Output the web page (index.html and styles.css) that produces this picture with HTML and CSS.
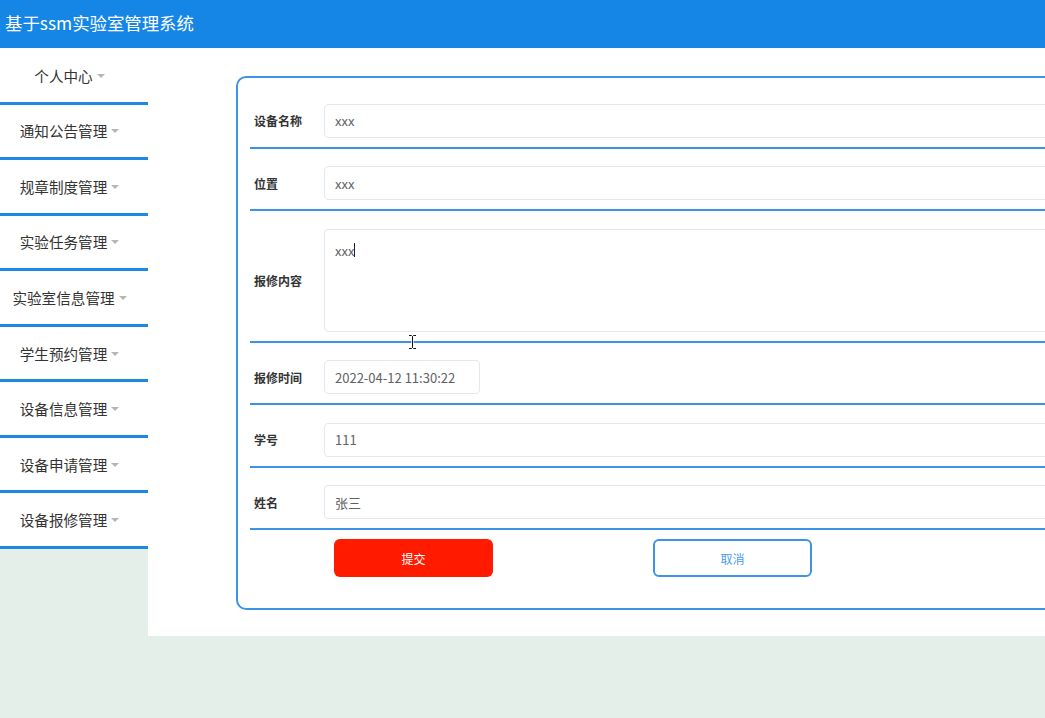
FILE: index.html
```html
<!DOCTYPE html>
<html lang="zh-CN">
<head>
<meta charset="utf-8">
<title>基于ssm实验室管理系统</title>
<link rel="stylesheet" href="styles.css">
</head>
<body>
<header class="topbar">基于ssm实验室管理系统</header>
<div class="layout">
  <nav class="sidebar">
    <div class="nav-item">个人中心<span class="caret"></span></div>
    <div class="nav-item">通知公告管理<span class="caret"></span></div>
    <div class="nav-item">规章制度管理<span class="caret"></span></div>
    <div class="nav-item">实验任务管理<span class="caret"></span></div>
    <div class="nav-item">实验室信息管理<span class="caret"></span></div>
    <div class="nav-item">学生预约管理<span class="caret"></span></div>
    <div class="nav-item">设备信息管理<span class="caret"></span></div>
    <div class="nav-item">设备申请管理<span class="caret"></span></div>
    <div class="nav-item">设备报修管理<span class="caret"></span></div>
  </nav>
  <main class="main">
    <form class="card">
      <div class="row">
        <label class="label">设备名称</label>
        <div class="input">xxx</div>
      </div>
      <div class="row">
        <label class="label">位置</label>
        <div class="input">xxx</div>
      </div>
      <div class="row">
        <label class="label">报修内容</label>
        <div class="input textarea">xxx<span class="text-caret"></span></div>
      </div>
      <div class="row">
        <label class="label">报修时间</label>
        <div class="input date">2022-04-12 11:30:22</div>
      </div>
      <div class="row">
        <label class="label">学号</label>
        <div class="input">111</div>
      </div>
      <div class="row">
        <label class="label">姓名</label>
        <div class="input">张三</div>
      </div>
      <div class="actions">
        <button type="button" class="btn btn-submit">提交</button>
        <button type="button" class="btn btn-cancel">取消</button>
      </div>
    </form>
  </main>
</div>
<svg class="ibeam" width="9" height="16" viewBox="0 0 9 16" aria-hidden="true">
  <path d="M1 1.5h2.5L4.5 2.5L5.5 1.5H8M4.5 2.5V13.5M1 14.5h2.5L4.5 13.5L5.5 14.5H8" fill="none" stroke="#fff" stroke-width="2.2"/>
  <path d="M1 1.5h2.5L4.5 2.5L5.5 1.5H8M4.5 2.5V13.5M1 14.5h2.5L4.5 13.5L5.5 14.5H8" fill="none" stroke="#111" stroke-width="1"/>
</svg>
</body>
</html>
```

FILE: styles.css
```css
html, body {
  margin: 0;
  padding: 0;
  overflow: hidden;
}
body {
  width: 1045px;
  height: 718px;
  background: #e4efe9;
  font-family: "Noto Sans CJK SC", "Noto Sans", "Liberation Sans", sans-serif;
  color: #333;
  position: relative;
}
.topbar {
  height: 48px;
  background: #1686e6;
  color: #fff;
  font-size: 17.4px;
  line-height: 46px;
  padding-left: 5px;
  box-sizing: border-box;
}
.layout {
  display: flex;
  align-items: flex-start;
}
.sidebar {
  width: 148px;
  flex: none;
  background: #fff;
  padding-top: 1px;
}
.nav-item {
  box-sizing: border-box;
  height: 55.55px;
  border-bottom: 3px solid #1e88e5;
  display: flex;
  align-items: center;
  justify-content: center;
  padding-right: 9px;
  font-size: 14.6px;
  color: #333;
}
.caret {
  width: 0;
  height: 0;
  border-left: 4px solid transparent;
  border-right: 4px solid transparent;
  border-top: 4px solid #b5b5b5;
  margin-left: 4px;
  margin-top: 1px;
}
.main {
  flex: none;
  width: 1000px;
  background: #fff;
  padding: 28px 0 26px 88px;
}
.card {
  width: 900px;
  border: 2px solid #3d93e8;
  border-radius: 10px;
  padding: 8px 0 0 12px;
  margin: 0;
}
.row {
  display: flex;
  align-items: center;
  padding: 17.5px 0 9px 4px;
  border-bottom: 2px solid #3d93e8;
}
.label {
  width: 70px;
  flex: none;
  font-size: 12px;
  font-weight: bold;
  color: #333;
}
.input {
  box-sizing: border-box;
  height: 34px;
  flex: 1;
  border: 1px solid #e4e7ed;
  border-radius: 4px;
  padding: 0 10px;
  font-size: 13px;
  color: #606266;
  display: flex;
  align-items: center;
}
.textarea {
  height: 103px;
  align-items: flex-start;
  padding-top: 11px;
}
.text-caret {
  display: inline-block;
  width: 1px;
  height: 14px;
  background: #222;
  margin-top: 2px;
}
.date {
  flex: none;
  width: 156px;
}
.actions {
  display: flex;
  gap: 160px;
  padding: 9px 0 31px 84px;
}
.btn {
  box-sizing: border-box;
  width: 159px;
  height: 38px;
  border-radius: 6px;
  font-family: inherit;
  font-size: 12px;
  cursor: pointer;
}
.btn-submit {
  background: #ff1a00;
  border: none;
  color: #fff;
}
.btn-cancel {
  background: #fff;
  border: 2px solid #3d93e8;
  color: #4a9bec;
}
.ibeam {
  position: absolute;
  left: 408px;
  top: 334px;
}
```
